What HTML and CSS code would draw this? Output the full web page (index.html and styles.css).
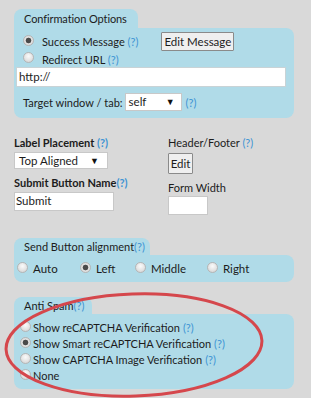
FILE: index.html
```html
<!DOCTYPE html>
<html>
<head>
<meta charset="utf-8">
<link rel="stylesheet" href="styles.css">
</head>
<body>
<div class="page">
  <section class="group">
    <div class="tab tab-confirm">Confirmation Options</div>
    <div class="panel panel-confirm">
      <div class="row row-success">
        <span class="radio checked"></span>
        <span class="label">Success Message <a class="help">(?)</a></span>
        <button class="btn btn-msg">Edit Message</button>
      </div>
      <div class="row row-redirect">
        <span class="radio"></span>
        <span class="label">Redirect URL <a class="help">(?)</a></span>
      </div>
      <div class="url">http://</div>
      <div class="row row-target">
        <span>Target window / tab:</span>
        <div class="select select-self"><span>self</span><span class="arrow">▼</span></div>
        <a class="help">(?)</a>
      </div>
    </div>
  </section>

  <div class="settings">
    <div class="col">
      <div class="field-label bold">Label Placement <a class="help">(?)</a></div>
      <div class="select select-place"><span>Top Aligned</span><span class="arrow">▼</span></div>
      <div class="field-label bold second">Submit Button Name<a class="help">(?)</a></div>
      <div class="text-input input-submit">Submit</div>
    </div>
    <div class="col">
      <div class="field-label">Header/Footer <a class="help">(?)</a></div>
      <button class="btn btn-edit">Edit</button>
      <div class="field-label second-r">Form Width</div>
      <div class="text-input input-width"></div>
    </div>
  </div>

  <section class="group group-align">
    <div class="tab tab-align">Send Button alignment<a class="help">(?)</a></div>
    <div class="panel panel-align">
      <span class="opt opt-auto"><span class="radio"></span>Auto</span>
      <span class="opt opt-left"><span class="radio checked"></span>Left</span>
      <span class="opt opt-middle"><span class="radio"></span>Middle</span>
      <span class="opt opt-right"><span class="radio"></span>Right</span>
    </div>
  </section>

  <section class="group group-spam">
    <div class="tab tab-spam">Anti Spam<a class="help">(?)</a></div>
    <div class="panel panel-spam">
      <div class="srow"><span class="radio"></span>Show reCAPTCHA Verification <a class="help">(?)</a></div>
      <div class="srow"><span class="radio checked"></span>Show Smart reCAPTCHA Verification <a class="help">(?)</a></div>
      <div class="srow"><span class="radio"></span>Show CAPTCHA Image Verification <a class="help">(?)</a></div>
      <div class="srow"><span class="radio"></span>None</div>
    </div>
  </section>
</div>
<svg class="mark" width="311" height="398" viewBox="0 0 311 398">
  <ellipse cx="134" cy="345" rx="128" ry="51" fill="none" stroke="#d5474c" stroke-width="3" transform="rotate(-2 134 345)"/>
</svg>
</body>
</html>
```

FILE: styles.css
```css
* { box-sizing: border-box; }
html, body { margin: 0; }
body {
  background: #d9d9d9;
  font-family: Lato, "Open Sans", sans-serif;
  font-size: 11px;
  color: #1c1c1c;
  width: 311px;
  height: 398px;
  overflow: hidden;
  position: relative;
}
.page { padding: 9px 17px 0 14px; }
.help { color: #3d94d4; text-decoration: none; }

.tab {
  display: inline-block;
  background: #b0dbe8;
  border-radius: 8px 8px 0 0;
  line-height: 14px;
  white-space: nowrap;
}
.tab-confirm { height: 19px; padding: 3px 11px 0 10px; letter-spacing: -0.1px; }
.panel {
  background: #b0dbe8;
  border-radius: 0 8px 8px 8px;
}
.group { display: flex; flex-direction: column; align-items: flex-start; }
.group .panel { align-self: stretch; }

.panel-confirm { padding: 4px 8px 7px 2px; }
.row { display: flex; align-items: center; white-space: nowrap; }
.row-success { height: 19px; padding-left: 7px; }
.row-redirect { height: 16px; padding-left: 7px; }
.row .radio { margin-right: 8px; margin-top: -3px; }
.btn {
  font-family: Lato, sans-serif;
  font-size: 11.5px;
  color: #1c1c1c;
  background: #efefef;
  border: 1px solid #8a8a8a;
  border-radius: 1px;
  padding: 0;
  margin: 0;
  white-space: nowrap;
}
.btn-msg { margin-left: 23px; width: 73px; height: 19px; }
.url {
  height: 20px;
  width: 270px;
  background: #fff;
  border: 1px solid #c9d3d6;
  padding: 1px 0 0 2px;
  line-height: 16px;
  font-size: 11.5px;
}
.row-target { height: 18px; margin-top: 6px; padding-left: 7px; }
.select {
  display: flex;
  align-items: center;
  justify-content: space-between;
  background: #fff;
  border: 1px solid #c8c8c8;
  line-height: 14px;
  font-size: 11.5px;
  white-space: nowrap;
}
.arrow { font-size: 9px; color: #111; }
.select-self { width: 57px; height: 18px; margin-left: 2px; padding: 0 6px 0 3px; margin-right: 4px; }

.settings {
  display: grid;
  grid-template-columns: 154px auto;
  padding-top: 18px;
  height: 120px;
}
.field-label { line-height: 14px; white-space: nowrap; }
.bold { font-weight: bold; }
.select-place { width: 94px; height: 17px; margin-top: 2px; padding: 0 8px 0 4px; }
.second { margin-top: 7px; }
.text-input {
  background: #fff;
  border: 1px solid #c8c8c8;
  line-height: 16px;
  padding-left: 1px;
  font-size: 11.5px;
}
.input-submit { width: 100px; height: 19px; margin-top: 2px; }
.btn-edit { display: block; width: 25px; height: 21px; margin-top: 3px; }
.second-r { margin-top: 7px; }
.input-width { width: 40px; height: 19px; margin-top: 1px; }

.tab-align { height: 17px; padding: 2px 5px 0 10px; }
.panel-align {
  height: 27px;
  display: flex;
  align-items: center;
  padding-left: 3px;
  font-size: 11.5px;
}
.opt { display: flex; align-items: center; }
.opt .radio { margin-right: 5px; margin-top: -2px; }
.opt-auto { width: 63px; }
.opt-left { width: 55px; }
.opt-middle { width: 72px; }

.group-spam { margin-top: 15px; }
.tab-spam { height: 17px; padding: 2px 8px 0 10px; }
.panel-spam { height: 75px; padding: 5px 0 0 6px; }
.srow { display: flex; align-items: center; height: 16px; white-space: nowrap; }
.srow .radio { margin-right: 2px; margin-top: -2px; }
.srow .help { margin-left: 3px; }

.radio {
  display: inline-block;
  flex: none;
  width: 11px;
  height: 11px;
  border-radius: 50%;
  border: 1px solid #b5b5b5;
  background: radial-gradient(circle at 50% 35%, #fafafa 0%, #e2e2e2 60%, #cfcfcf 100%);
}
.radio.checked {
  background: radial-gradient(circle, #4a4a4a 0 2.2px, #777 2.7px, #e4e4e4 3.2px, #d4d4d4 100%);
}

.mark { position: absolute; left: 0; top: 0; pointer-events: none; }
```
